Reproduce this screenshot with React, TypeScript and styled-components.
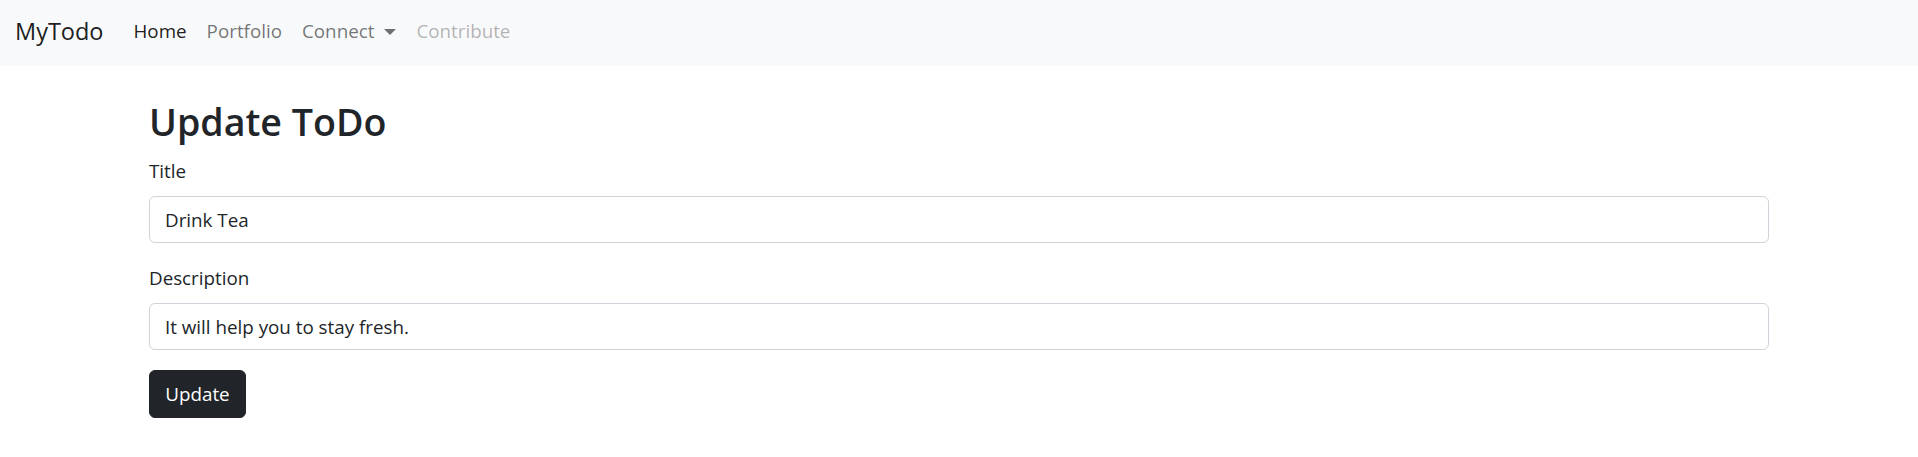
import styled, { createGlobalStyle } from "styled-components";

const GlobalStyle = createGlobalStyle`
  body {
    margin: 0;
    font-family: "Open Sans", "Noto Sans", sans-serif;
    font-size: 18.8px;
    line-height: 30px;
    color: #212529;
    background: #fff;
  }
  * {
    box-sizing: border-box;
  }
`;

const Navbar = styled.nav`
  height: 66px;
  background: #f8f9fa;
  display: flex;
  align-items: center;
  padding: 0 15px 4px;
`;

const Brand = styled.a`
  font-size: 23.5px;
  line-height: 37px;
  color: rgba(0, 0, 0, 0.9);
  text-decoration: none;
  margin-right: 20px;
`;

const NavList = styled.ul`
  display: flex;
  list-style: none;
  margin: 0;
  padding: 0;
`;

const NavLink = styled.a<{ $state?: "active" | "disabled" }>`
  display: flex;
  align-items: center;
  padding: 10px;
  text-decoration: none;
  color: ${(p) =>
    p.$state === "active"
      ? "rgba(0, 0, 0, 0.9)"
      : p.$state === "disabled"
      ? "rgba(0, 0, 0, 0.3)"
      : "rgba(0, 0, 0, 0.55)"};
`;

const Caret = styled.span`
  display: inline-block;
  margin-left: 10px;
  margin-top: 2px;
  border-top: 6px solid currentColor;
  border-left: 6px solid transparent;
  border-right: 6px solid transparent;
`;

const Container = styled.main`
  max-width: 1650px;
  margin: 0 auto;
  padding: 32px 15px 0;
`;

const Heading = styled.h2`
  font-size: 37.6px;
  font-weight: 600;
  line-height: 48px;
  margin: 0 0 10px;
`;

const Field = styled.div`
  margin-bottom: 20px;
`;

const Label = styled.label`
  display: block;
  margin-bottom: 10px;
`;

const Input = styled.input`
  display: block;
  width: 100%;
  height: 47px;
  padding: 7px 15px;
  font: inherit;
  color: #212529;
  border: 1px solid #ced4da;
  border-radius: 6px;
  background: #fff;
`;

const Button = styled.button`
  height: 48px;
  width: 97px;
  padding: 0;
  font: inherit;
  color: #fff;
  background: #212529;
  border: 1px solid #212529;
  border-radius: 6px;
`;

export default function App() {
  return (
    <>
      <GlobalStyle />
      <Navbar>
        <Brand href="#">MyTodo</Brand>
        <NavList>
          <li>
            <NavLink $state="active" href="#">Home</NavLink>
          </li>
          <li>
            <NavLink href="#">Portfolio</NavLink>
          </li>
          <li>
            <NavLink href="#">
              Connect
              <Caret />
            </NavLink>
          </li>
          <li>
            <NavLink $state="disabled">Contribute</NavLink>
          </li>
        </NavList>
      </Navbar>
      <Container>
        <Heading>Update ToDo</Heading>
        <form>
          <Field>
            <Label htmlFor="title">Title</Label>
            <Input id="title" defaultValue="Drink Tea" />
          </Field>
          <Field>
            <Label htmlFor="desc">Description</Label>
            <Input id="desc" defaultValue="It will help you to stay fresh." />
          </Field>
          <Button type="submit">Update</Button>
        </form>
      </Container>
    </>
  );
}
